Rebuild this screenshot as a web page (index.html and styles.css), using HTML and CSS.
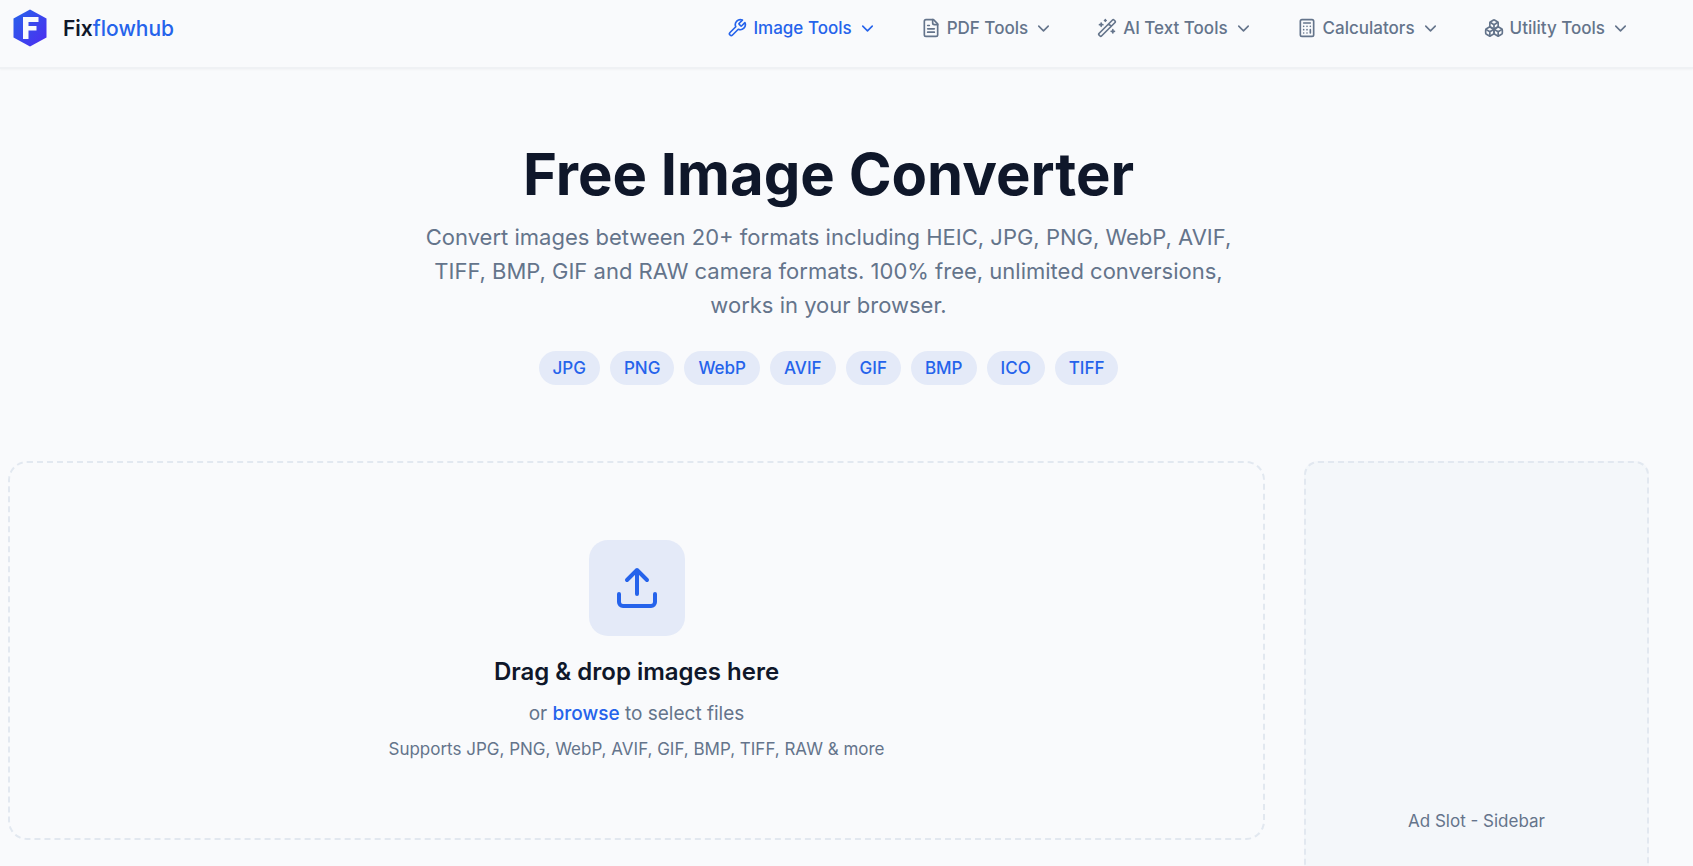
FILE: index.html
```html
<!DOCTYPE html>
<html lang="en">

<head>
    <meta charset="UTF-8">
    <meta name="viewport" content="width=device-width, initial-scale=1.0">
    <title>Free Image Converter - Fixflowhub</title>
    <link rel="stylesheet" href="styles.css">
</head>

<body>

    <header class="header">
        <a href="#" class="logo">
            <svg class="logo-mark" viewBox="0 0 34 38" aria-hidden="true">
                <defs>
                    <linearGradient id="logoFill" x1="0" y1="0" x2="1" y2="1">
                        <stop offset="0" stop-color="#2563eb" />
                        <stop offset="1" stop-color="#4f2bf0" />
                    </linearGradient>
                </defs>
                <path d="M17 0.5L33.5 9.5V28.5L17 37.5L0.5 28.5V9.5Z" fill="url(#logoFill)" />
                <path d="M10 8H25.5V13H15.5V17H23.5V21.5H15.5V30H10Z" fill="#f8fafc" />
            </svg>
            <span class="logo-text">Fix<span>flowhub</span></span>
        </a>
        <nav class="navbar">
            <button type="button" class="nav-item active">
                <svg class="icon" viewBox="0 0 24 24" aria-hidden="true"><path d="M14.7 6.3a1 1 0 0 0 0 1.4l1.6 1.6a1 1 0 0 0 1.4 0l3.77-3.77a6 6 0 0 1-7.94 7.94l-6.91 6.91a2.12 2.12 0 0 1-3-3l6.91-6.91a6 6 0 0 1 7.94-7.94l-3.76 3.76z" /></svg>
                Image Tools
                <svg class="chevron" viewBox="0 0 24 24" aria-hidden="true"><path d="m6 9 6 6 6-6" /></svg>
            </button>
            <button type="button" class="nav-item">
                <svg class="icon" viewBox="0 0 24 24" aria-hidden="true"><path d="M15 2H6a2 2 0 0 0-2 2v16a2 2 0 0 0 2 2h12a2 2 0 0 0 2-2V7Z" /><path d="M14 2v4a2 2 0 0 0 2 2h4M10 9H8M16 13H8M16 17H8" /></svg>
                PDF Tools
                <svg class="chevron" viewBox="0 0 24 24" aria-hidden="true"><path d="m6 9 6 6 6-6" /></svg>
            </button>
            <button type="button" class="nav-item">
                <svg class="icon" viewBox="0 0 24 24" aria-hidden="true"><path d="m21.64 3.64-1.28-1.28a1.21 1.21 0 0 0-1.72 0L2.36 18.64a1.21 1.21 0 0 0 0 1.72l1.28 1.28a1.2 1.2 0 0 0 1.72 0L21.64 5.36a1.2 1.2 0 0 0 0-1.72M14 7l3 3M5 6v4M19 14v4M10 2v2M7 8H3M21 16h-4M11 3H9" /></svg>
                AI Text Tools
                <svg class="chevron" viewBox="0 0 24 24" aria-hidden="true"><path d="m6 9 6 6 6-6" /></svg>
            </button>
            <button type="button" class="nav-item">
                <svg class="icon" viewBox="0 0 24 24" aria-hidden="true"><rect width="16" height="20" x="4" y="2" rx="2" /><path d="M8 6h8M16 14v4M16 10h.01M12 10h.01M8 10h.01M12 14h.01M8 14h.01M12 18h.01M8 18h.01" /></svg>
                Calculators
                <svg class="chevron" viewBox="0 0 24 24" aria-hidden="true"><path d="m6 9 6 6 6-6" /></svg>
            </button>
            <button type="button" class="nav-item">
                <svg class="icon" viewBox="0 0 24 24" aria-hidden="true">
                    <path d="M2.97 12.92A2 2 0 0 0 2 14.63v3.24a2 2 0 0 0 .97 1.71l3 1.8a2 2 0 0 0 2.06 0L12 19v-5.5l-5-3-4.03 2.42Z" />
                    <path d="m7 16.5-4.74-2.85M7 16.5l5-3M7 16.5v5.17" />
                    <path d="M12 13.5V19l3.97 2.38a2 2 0 0 0 2.06 0l3-1.8a2 2 0 0 0 .97-1.71v-3.24a2 2 0 0 0-.97-1.71L17 10.5l-5 3Z" />
                    <path d="m17 16.5-5-3M17 16.5l4.74-2.85M17 16.5v5.17" />
                    <path d="M7.97 4.42A2 2 0 0 0 7 6.13v4.37l5 3 5-3V6.13a2 2 0 0 0-.97-1.71l-3-1.8a2 2 0 0 0-2.06 0l-3 1.8Z" />
                    <path d="M12 8 7.26 5.15M12 8l4.74-2.85M12 13.5V8" />
                </svg>
                Utility Tools
                <svg class="chevron" viewBox="0 0 24 24" aria-hidden="true"><path d="m6 9 6 6 6-6" /></svg>
            </button>
        </nav>
    </header>

    <main class="container">
        <section class="hero">
            <h1>Free Image Converter</h1>
            <p>Convert images between 20+ formats including HEIC, JPG, PNG, WebP, AVIF, TIFF, BMP, GIF and RAW camera formats. 100% free, unlimited conversions, works in your browser.</p>
            <ul class="formats">
                <li>JPG</li>
                <li>PNG</li>
                <li>WebP</li>
                <li>AVIF</li>
                <li>GIF</li>
                <li>BMP</li>
                <li>ICO</li>
                <li>TIFF</li>
            </ul>
        </section>

        <div class="content">
            <section class="dropzone">
                <div class="upload-icon">
                    <svg viewBox="0 0 24 24" aria-hidden="true"><path d="M21 15v4a2 2 0 0 1-2 2H5a2 2 0 0 1-2-2v-4M17 8l-5-5-5 5M12 3v12" /></svg>
                </div>
                <h2>Drag &amp; drop images here</h2>
                <p class="browse">or <a href="#">browse</a> to select files</p>
                <p class="supports">Supports JPG, PNG, WebP, AVIF, GIF, BMP, TIFF, RAW &amp; more</p>
            </section>
            <aside class="ad-slot">Ad Slot - Sidebar</aside>
        </div>
    </main>

</body>

</html>
```
FILE: styles.css
```css
* {
    box-sizing: border-box;
}

body {
    font-family: Inter, sans-serif;
    background-color: #f9fafc;
    color: #64748b;
    margin: 0;
}

h1,
h2,
p,
ul {
    margin: 0;
    padding: 0;
}

a {
    color: #2563eb;
    text-decoration: none;
}

.header {
    display: flex;
    justify-content: space-between;
    align-items: center;
    padding: 9px 46px 20px 13px;
    border-bottom: 2px solid #eff1f4;
    box-shadow: 0 1px 2px rgba(15, 23, 42, 0.03);
}

.logo {
    display: flex;
    align-items: center;
    gap: 16px;
}

.logo-mark {
    width: 34px;
    height: 38px;
}

.logo-text {
    color: #0f172a;
    font-size: 21px;
    font-weight: 600;
}

.logo-text span {
    color: #2563eb;
    font-weight: 500;
}

.navbar {
    display: flex;
    gap: 10px;
}

.nav-item {
    display: flex;
    align-items: center;
    gap: 6px;
    padding: 0 17px;
    border: none;
    background: none;
    color: #64748b;
    font-family: inherit;
    font-size: 17px;
    font-weight: 500;
    cursor: pointer;
}

.nav-item.active {
    color: #2563eb;
}

.icon,
.chevron,
.upload-icon svg {
    fill: none;
    stroke: currentColor;
    stroke-width: 2;
    stroke-linecap: round;
    stroke-linejoin: round;
}

.icon {
    width: 20px;
    height: 20px;
}

.chevron {
    width: 19px;
    height: 19px;
}

.container {
    padding: 76px 44px 0 8px;
}

.hero {
    display: flex;
    flex-direction: column;
    align-items: center;
    text-align: center;
    margin-bottom: 76px;
}

.hero h1 {
    color: #0f172a;
    font-size: 58px;
    font-weight: 700;
    line-height: 58px;
    margin-bottom: 17px;
}

.hero p {
    max-width: 807px;
    font-size: 22px;
    line-height: 34px;
    margin-bottom: 29px;
}

.formats {
    display: flex;
    flex-wrap: wrap;
    justify-content: center;
    gap: 10px;
    list-style: none;
}

.formats li {
    padding: 0 14px;
    border-radius: 17px;
    background-color: #e4eaf8;
    color: #2563eb;
    font-size: 17px;
    font-weight: 500;
    line-height: 34px;
}

.content {
    display: grid;
    grid-template-columns: 1fr 345px;
    align-items: start;
    gap: 39px;
}

.dropzone {
    display: flex;
    flex-direction: column;
    align-items: center;
    padding: 77px 20px;
    border: 2px dashed #e2e8f0;
    border-radius: 19px;
    text-align: center;
}

.upload-icon {
    display: flex;
    align-items: center;
    justify-content: center;
    width: 96px;
    height: 96px;
    margin-bottom: 19px;
    border-radius: 19px;
    background-color: #e4eaf8;
    color: #2563eb;
}

.upload-icon svg {
    width: 48px;
    height: 48px;
}

.dropzone h2 {
    color: #0f172a;
    font-size: 24px;
    font-weight: 600;
    line-height: 34px;
    margin-bottom: 10px;
}

.browse {
    font-size: 19px;
    line-height: 30px;
    margin-bottom: 8px;
}

.browse a {
    font-weight: 500;
}

.supports {
    font-size: 17px;
    line-height: 24px;
}

.ad-slot {
    display: flex;
    align-items: center;
    justify-content: center;
    height: 720px;
    border: 2px dashed #e2e8f0;
    border-radius: 14px;
    background-color: #f4f7fa;
    font-size: 17px;
}
```
